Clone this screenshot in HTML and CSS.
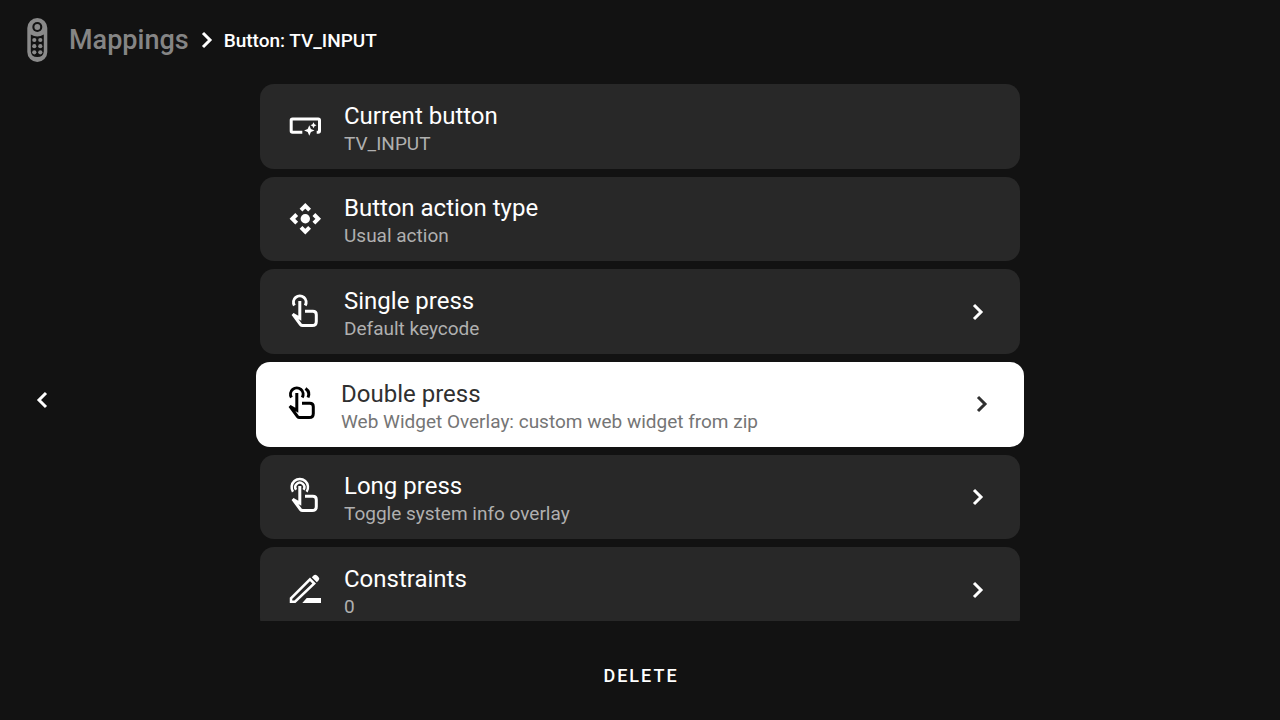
FILE: index.html
```html
<!DOCTYPE html>
<html lang="en">
<head>
<meta charset="utf-8">
<title>Button: TV_INPUT</title>
<link rel="stylesheet" href="styles.css">
</head>
<body>
<svg class="defs" aria-hidden="true">
  <symbol id="chevron" viewBox="0 0 12 18"><path d="M2 2l7 7-7 7"/></symbol>
  <symbol id="hand" viewBox="0 0 36 36"><path d="M11.800 7V24.200L4.800 20.200L12.500 30.500Q13.300 31.500 14.500 31.500H24.200Q28.300 31.500 28.300 27.400V20.800Q28.300 17.300 24.800 17.300H17"/></symbol>
</svg>
<header class="header">
  <svg class="remote" viewBox="0 0 22 46" aria-hidden="true">
    <rect class="remote-body" x="1.300" y="1" width="20" height="44" rx="10"/>
    <circle class="remote-cut" cx="11.300" cy="10" r="5"/>
    <circle class="remote-body" cx="11.300" cy="10" r="2.900"/>
    <path class="remote-cut" d="M4.800 17.500Q11.300 21.500 17.800 17.500V34.500Q17.300 40 11.300 40T4.800 34.500Z"/>
    <g class="remote-body">
      <circle cx="8.300" cy="23" r="2.100"/><circle cx="14.300" cy="23" r="2.100"/>
      <circle cx="8.300" cy="29.200" r="2.100"/><circle cx="14.300" cy="29.200" r="2.100"/>
      <circle cx="8.300" cy="35.300" r="2.100"/><circle cx="14.300" cy="35.300" r="2.100"/>
    </g>
  </svg>
  <nav class="crumbs" aria-label="Breadcrumb">
    <a class="crumb-root" href="#">Mappings</a>
    <svg class="chevron" aria-hidden="true"><use href="#chevron"/></svg>
    <h1 class="crumb-current">Button: TV_INPUT</h1>
  </nav>
</header>
<main class="body">
  <button class="back" type="button" aria-label="Back"><svg class="chevron chevron-back" aria-hidden="true"><use href="#chevron"/></svg></button>
  <section class="content">
    <div class="viewport">
      <div class="list">
        <button class="card" type="button">
          <svg class="icon" viewBox="0 0 36 36" aria-hidden="true">
            <path d="M14.300 24.300H4.500Q3.200 24.300 3.200 23V12.300Q3.200 11 4.500 11H30.200Q31.500 11 31.500 12.300V23Q31.500 24.300 30.200 24.300H28.700"/>
            <path class="solid" d="M21.300 17.300L22.900 20.900L26.500 22.500L22.900 24.100L21.300 27.700L19.700 24.100L16.100 22.500L19.700 20.900ZM25.500 14.200L26.500 16.200L28.500 17.200L26.500 18.200L25.500 20.200L24.500 18.200L22.500 17.200L24.500 16.200Z"/>
          </svg>
          <span class="text"><span class="title">Current button</span><span class="sub">TV_INPUT</span></span>
        </button>
        <button class="card" type="button">
          <svg class="icon" viewBox="0 0 36 36" aria-hidden="true">
            <circle class="solid" cx="17.300" cy="17.800" r="4.700"/>
            <path class="thick" d="M13 9.200L17.300 4.900L21.600 9.200M13 26.400L17.300 30.700L21.600 26.400M8.700 13.500L4.400 17.800L8.700 22.100M25.900 13.500L30.200 17.800L25.900 22.100"/>
          </svg>
          <span class="text"><span class="title">Button action type</span><span class="sub">Usual action</span></span>
        </button>
        <button class="card" type="button">
          <svg class="icon" viewBox="0 0 36 36" aria-hidden="true">
            <use href="#hand"/><path d="M6.400 11.500A6.300 6.300 0 1 1 17.200 11.500"/>
          </svg>
          <span class="text"><span class="title">Single press</span><span class="sub">Default keycode</span></span>
          <svg class="chevron" aria-hidden="true"><use href="#chevron"/></svg>
        </button>
        <button class="card card-focused" type="button">
          <svg class="icon" viewBox="0 0 36 36" aria-hidden="true">
            <use href="#hand"/><path d="M6.400 11.500A6.300 6.300 0 1 1 17.200 11.500M20.500 2.500Q25.500 6 23 11.500"/>
          </svg>
          <span class="text"><span class="title">Double press</span><span class="sub">Web Widget Overlay: custom web widget from zip</span></span>
          <svg class="chevron" aria-hidden="true"><use href="#chevron"/></svg>
        </button>
        <button class="card" type="button">
          <svg class="icon" viewBox="0 0 36 36" aria-hidden="true">
            <use href="#hand"/><path class="thin" d="M5 12.800A8.200 8.200 0 1 1 18.600 12.800M8.100 10.800A4.500 4.500 0 1 1 15.500 10.800"/>
          </svg>
          <span class="text"><span class="title">Long press</span><span class="sub">Toggle system info overlay</span></span>
          <svg class="chevron" aria-hidden="true"><use href="#chevron"/></svg>
        </button>
        <button class="card" type="button">
          <svg class="icon" viewBox="0 0 36 36" aria-hidden="true">
            <path class="thin" d="M3 29.700V26.300L22 7.300L26.200 11.500L7 29.700Z"/>
            <path class="solid" d="M23.800 5.300L25.500 3.600Q27.200 2 29 3.600L30.500 5.100Q32.200 7 30.500 8.600L28.800 10.300ZM18.700 26H33V31H14.300Z"/>
          </svg>
          <span class="text"><span class="title">Constraints</span><span class="sub">0</span></span>
          <svg class="chevron" aria-hidden="true"><use href="#chevron"/></svg>
        </button>
      </div>
    </div>
    <footer class="footer"><button class="delete" type="button">DELETE</button></footer>
  </section>
</main>
</body>
</html>
```
FILE: styles.css
```css
* { box-sizing: border-box; }
body {
  margin: 0;
  height: 100vh;
  display: flex;
  flex-direction: column;
  overflow: hidden;
  background: #121212;
  color: #fff;
  font-family: Roboto, sans-serif;
}
button {
  margin: 0;
  border: 0;
  background: none;
  color: inherit;
  font: inherit;
  text-align: left;
}
.defs { position: absolute; width: 0; height: 0; }
.header {
  display: flex;
  align-items: center;
  gap: 21px;
  height: 80px;
  padding-left: 26px;
}
.remote { width: 22px; height: 46px; }
.remote-body { fill: #8a8a8a; }
.remote-cut { fill: #121212; }
.crumbs { display: flex; align-items: center; gap: 11px; }
.crumb-root {
  padding-right: 1px;
  color: #858585;
  font-size: 27px;
  font-weight: 500;
  line-height: 32px;
  text-decoration: none;
}
.crumb-current { margin: 2px 0 0; font-size: 19px; font-weight: 500; line-height: 24px; }
.chevron {
  flex: none;
  width: 12px;
  height: 18px;
  fill: none;
  stroke: currentColor;
  stroke-width: 3;
}
.chevron-back { transform: rotate(180deg); }
.body {
  flex: 1;
  min-height: 0;
  display: grid;
  grid-template-columns: 1fr minmax(0, 776px) 1fr;
}
.back {
  align-self: center;
  justify-self: start;
  display: flex;
  margin-left: 20px;
  padding: 16px;
}
.content { display: flex; flex-direction: column; min-height: 0; }
.viewport { flex: 1; min-height: 0; overflow: hidden; padding: 4px 8px 0; }
.list {
  display: grid;
  grid-auto-rows: 1fr;
  gap: 8px;
  height: 548px;
}
.card {
  display: flex;
  align-items: center;
  gap: 20px;
  min-width: 0;
  padding: 0 36px 0 28px;
  border-radius: 14px;
  background: #282828;
}
.card-focused {
  margin: 0 -4px;
  padding-left: 29px;
  background: #fff;
  color: #303030;
}
.icon {
  flex: none;
  width: 36px;
  height: 36px;
  overflow: visible;
  fill: none;
  stroke: currentColor;
  stroke-width: 3;
}
.card-focused .icon { color: #000; }
.solid { fill: currentColor; stroke: none; }
.thick { stroke-width: 4; }
.thin { stroke-width: 2.5; }
.text { flex: 1; min-width: 0; padding-top: 3px; }
.title, .sub { display: block; white-space: nowrap; }
.title { font-size: 24px; line-height: 32px; }
.sub { color: #b0b0b0; font-size: 19px; line-height: 24px; }
.card-focused .sub { color: #757575; }
.footer { display: flex; justify-content: center; height: 99px; padding-top: 35px; }
.delete {
  align-self: flex-start;
  padding: 8px 6px 8px 8px;
  font-size: 18px;
  font-weight: 500;
  line-height: 24px;
  letter-spacing: 2px;
}
```
